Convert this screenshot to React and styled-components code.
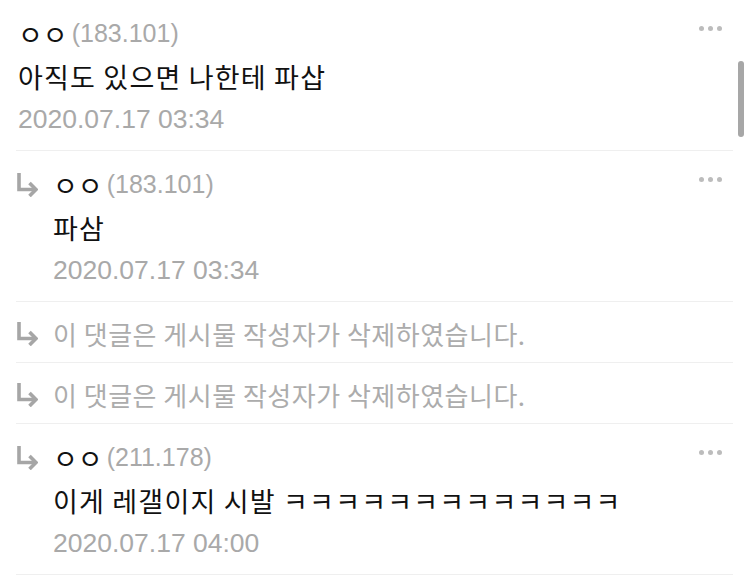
import React from "react";
import styled, { createGlobalStyle } from "styled-components";

const Global = createGlobalStyle`
  html, body { margin: 0; padding: 0; background: #fff; }
  body { font-family: "Liberation Sans", "Noto Sans CJK KR", sans-serif; overflow: hidden; }
`;

const Page = styled.div`
  position: relative;
  width: 750px;
  height: 583px;
  overflow: hidden;
  background: #fff;
`;

const List = styled.div`
  margin-left: 16px;
  width: 717px;
  display: flex;
  flex-direction: column;
`;

const Row = styled.div`
  display: flex;
  align-items: flex-start;
  padding: ${(p) => (p.$deleted ? "10px 0 7px" : "12px 0 9px")};
  border-bottom: 1px solid #efefef;
`;

const Indent = styled.div`
  width: 37px;
  height: 43px;
  flex: none;
  display: flex;
  align-items: center;
`;

const Content = styled.div`
  flex: 1;
  display: flex;
  flex-direction: column;
  padding-left: ${(p) => (p.$reply ? "0" : "2px")};
`;

const Header = styled.div`
  display: flex;
  align-items: center;
  height: 43px;
`;

const Name = styled.span`
  font-family: "Noto Sans CJK KR", sans-serif;
  font-size: 27px;
  color: #111;
`;

const Ip = styled.span`
  font-size: 25px;
  color: #a9a9a9;
  margin-left: 4px;
`;

const Dots = styled.div`
  margin-left: auto;
  margin-right: 11px;
  align-self: flex-start;
  margin-top: 14px;
  display: flex;
  gap: 4px;
`;

const Dot = styled.span`
  width: 5px;
  height: 5px;
  border-radius: 50%;
  background: #bcbcbc;
`;

const Body = styled.div`
  font-family: "Noto Sans CJK KR", sans-serif;
  font-size: 27px;
  letter-spacing: 1.2px;
  line-height: 43px;
  color: #111;
  white-space: nowrap;
`;

const DateText = styled.div`
  font-size: 26.5px;
  line-height: 43px;
  color: #a9a9a9;
`;

const Deleted = styled.div`
  font-family: "Noto Sans CJK KR", sans-serif;
  font-size: 26px;
  letter-spacing: 0.5px;
  line-height: 43px;
  color: #acacac;
  white-space: nowrap;
`;

const Scrollbar = styled.div`
  position: absolute;
  left: 738px;
  top: 61px;
  width: 6px;
  height: 76px;
  border-radius: 3px;
  background: #a7a7a7;
`;

const ReplyArrow = () => (
  <svg width="22" height="24" viewBox="0 0 22 24" fill="none">
    <path d="M3 0 V16.5 H20" stroke="#a6a6a6" strokeWidth="3.6" strokeLinejoin="miter" />
    <path d="M13.5 10 L20 16.5 L13.5 23" stroke="#a6a6a6" strokeWidth="3.6" strokeLinecap="butt" strokeLinejoin="miter" />
  </svg>
);

const More = () => (
  <Dots>
    <Dot />
    <Dot />
    <Dot />
  </Dots>
);

const Comment = ({ reply, ip, text, date }) => (
  <Row>
    {reply && (
      <Indent>
        <ReplyArrow />
      </Indent>
    )}
    <Content $reply={reply}>
      <Header>
        <Name>ㅇㅇ</Name>
        <Ip>({ip})</Ip>
        <More />
      </Header>
      <Body>{text}</Body>
      <DateText>{date}</DateText>
    </Content>
  </Row>
);

const DeletedComment = () => (
  <Row $deleted>
    <Indent>
      <ReplyArrow />
    </Indent>
    <Deleted>이 댓글은 게시물 작성자가 삭제하였습니다.</Deleted>
  </Row>
);

export default function App() {
  return (
    <Page>
      <Global />
      <List>
        <Comment ip="183.101" text="아직도 있으면 나한테 파삽" date="2020.07.17 03:34" />
        <Comment reply ip="183.101" text="파삼" date="2020.07.17 03:34" />
        <DeletedComment />
        <DeletedComment />
        <Comment reply ip="211.178" text="이게 레갤이지 시발 ㅋㅋㅋㅋㅋㅋㅋㅋㅋㅋㅋㅋㅋ" date="2020.07.17 04:00" />
      </List>
      <Scrollbar />
    </Page>
  );
}
